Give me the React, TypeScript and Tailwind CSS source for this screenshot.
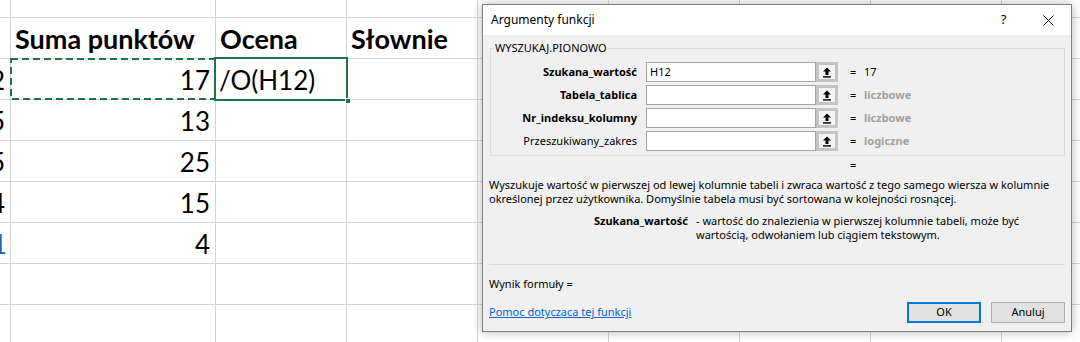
const line = "border-r border-b border-[#d4d4d4]";
const cellText = "flex items-end pb-[6px] text-[26px] leading-none whitespace-nowrap overflow-hidden";
const headText = "flex items-end pb-[6px] text-[27px] leading-none whitespace-nowrap overflow-hidden pl-[4px] font-bold";

const sheetRows = [
  { f: "2", num: "17" },
  { f: "5", num: "13" },
  { f: "5", num: "25" },
  { f: "4", num: "15" },
  { f: "1", num: "4", blue: true },
];

const EmptyCells = ({ count, h, prefix }: { count: number; h: string; prefix: string }) => (
  <>
    {Array.from({ length: count }).map((_, i) => (
      <div key={`${prefix}-${i}`} className={`${h} ${line}`} />
    ))}
  </>
);

const Sheet = () => (
  <div className="grid grid-cols-[11px_205px_repeat(7,131px)] font-['Lato',sans-serif] text-black">
    <EmptyCells count={9} h="h-[18px]" prefix="top" />

    {/* header row */}
    <div className={`h-[41px] ${line}`} />
    <div className={`h-[41px] ${line} ${headText}`}>Suma punktów</div>
    <div className={`h-[41px] ${line} ${headText}`}>Ocena</div>
    <div className={`h-[41px] ${line} ${headText}`}>Słownie</div>
    <EmptyCells count={5} h="h-[41px]" prefix="hdr" />

    {sheetRows.map((r, i) => (
      <div key={`row-${i}`} className="contents">
        <div
          className={`h-[41px] ${line} ${cellText} justify-end ${r.blue ? "text-[#2463b0] pr-[3px]" : "pr-[5px]"}`}
        >
          <span className="shrink-0">{r.f}</span>
        </div>
        <div className={`h-[41px] ${line} ${cellText} justify-end pr-[5px]`}>{r.num}</div>
        <div className={`h-[41px] ${line} ${cellText} pl-[3px]`}>{i === 0 ? "/O(H12)" : ""}</div>
        <EmptyCells count={6} h="h-[41px]" prefix={`r${i}`} />
      </div>
    ))}

    <EmptyCells count={9} h="h-[41px]" prefix="e1" />
    <EmptyCells count={9} h="h-[41px]" prefix="e2" />
  </div>
);

const RefButton = () => (
  <div className="w-[22px] h-[20px] border-[3px] border-[#c4c4c4] bg-[#f4f4f4] flex items-center justify-center">
    <svg width="10" height="11" viewBox="0 0 10 11">
      <polygon points="5,0.5 9,4.5 6.5,4.5 6.5,8 3.5,8 3.5,4.5 1,4.5" fill="#000" />
      <rect x="1" y="9.2" width="8" height="1.4" fill="#000" />
    </svg>
  </div>
);

const args = [
  { label: "Szukana_wartość", bold: true, input: "H12", value: "17", gray: false },
  { label: "Tabela_tablica", bold: true, input: "", value: "liczbowe", gray: true },
  { label: "Nr_indeksu_kolumny", bold: true, input: "", value: "liczbowe", gray: true },
  { label: "Przeszukiwany_zakres", bold: false, input: "", value: "logiczne", gray: true },
];

const Dialog = () => (
  <div className="absolute left-[482px] top-[4px] w-[590px] h-[328px] border border-[#7f7f7f] bg-[#f0f0f0] shadow-[0_0_10px_rgba(0,0,0,0.28)] font-['Noto_Sans',sans-serif] text-[11px] text-black flex flex-col">
    <div className="h-[30px] bg-white flex items-center shrink-0">
      <span className="pl-[8px] text-[12px]">Argumenty funkcji</span>
      <div className="ml-auto flex h-full">
        <div className="w-[45px] flex items-center justify-center text-[13px]">?</div>
        <div className="w-[45px] flex items-center justify-center">
          <svg width="11" height="11" viewBox="0 0 11 11">
            <path d="M0.5 0.5 L10.5 10.5 M10.5 0.5 L0.5 10.5" stroke="#000" strokeWidth="1" />
          </svg>
        </div>
      </div>
    </div>

    <div className="flex flex-col px-[6px]">
      <div className="relative mt-[13px] ml-[1px] border border-[#dcdcdc] pt-[13px] pb-[4px] flex flex-col gap-[3px]">
        <span className="absolute -top-[8px] left-[3px] px-[1px] bg-[#f0f0f0] leading-[14px]">WYSZUKAJ.PIONOWO</span>
        {args.map((a) => (
          <div key={a.label} className="flex items-center h-[20px]">
            <div className={`w-[146px] text-right ${a.bold ? "font-bold" : ""}`}>{a.label}</div>
            <div className="ml-[9px] w-[170px] h-[20px] border border-[#a5a5a5] bg-white flex items-center pl-[3px]">
              {a.input}
            </div>
            <RefButton />
            <div className="ml-[12px] w-[14px]">=</div>
            <div className={a.gray ? "font-bold text-[#a0a0a0]" : ""}>{a.value}</div>
          </div>
        ))}
      </div>

      <div className="mt-[2px] h-[14px] leading-[14px] pl-[361px]">=</div>

      <div className="mt-[6px] leading-[14px] whitespace-nowrap">
        Wyszukuje wartość w pierwszej od lewej kolumnie tabeli i zwraca wartość z tego samego wiersza w kolumnie
        <br />
        określonej przez użytkownika. Domyślnie tabela musi być sortowana w kolejności rosnącej.
      </div>

      <div className="mt-[8px] flex leading-[14px] whitespace-nowrap">
        <div className="w-[199px] text-right font-bold">Szukana_wartość</div>
        <div className="ml-[8px]">
          - wartość do znalezienia w pierwszej kolumnie tabeli, może być
          <br />
          wartością, odwołaniem lub ciągiem tekstowym.
        </div>
      </div>

      <div className="mt-[22px] h-px bg-[#d9d9d9]" />

      <div className="mt-[12px] leading-[14px]">Wynik formuły =</div>

      <div className="mt-[11px] flex items-center h-[21px]">
        <span className="text-[#0066cc] underline">Pomoc dotyczaca tej funkcji</span>
        <div className="ml-auto flex gap-[10px]">
          <div className="w-[74px] h-[21px] border-2 border-[#0078d7] bg-[#e1e1e1] flex items-center justify-center">OK</div>
          <div className="w-[74px] h-[21px] border border-[#adadad] bg-[#e1e1e1] flex items-center justify-center">Anuluj</div>
        </div>
      </div>
    </div>
  </div>
);

export default function App() {
  return (
    <div className="relative w-[1080px] h-[342px] overflow-hidden bg-white">
      <Sheet />

      {/* copy marquee around G12 */}
      <svg className="absolute left-[10px] top-[58px]" width="206" height="42">
        <rect x="1" y="1" width="204" height="40" fill="none" stroke="#217346" strokeWidth="2" strokeDasharray="7 4" />
      </svg>
      {/* active cell H12 */}
      <div className="absolute left-[214px] top-[57px] w-[134px] h-[44px] border-2 border-[#217346]" />
      <div className="absolute left-[345px] top-[98px] w-[6px] h-[6px] bg-[#217346] border border-white" />

      <Dialog />
    </div>
  );
}
